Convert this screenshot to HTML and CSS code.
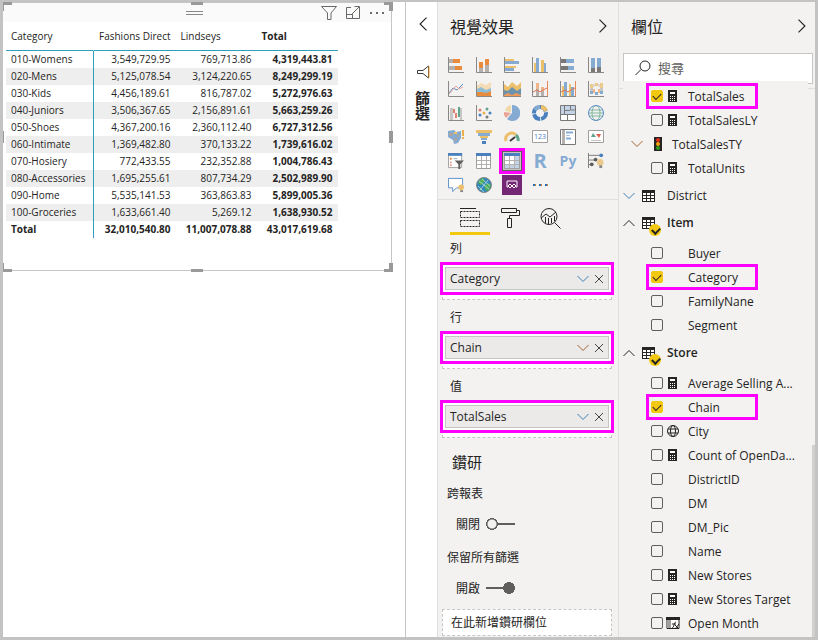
FILE: index.html
```
<!DOCTYPE html>
<html lang="zh-Hant">
<head>
    <meta charset="UTF-8">
    <meta name="viewport" content="width=device-width, initial-scale=1.0">
    <title>視覺效果</title>
    <link rel="stylesheet" href="styles.css">
</head>
<body>
    <!-- Shared icons -->
    <svg class="sprite" aria-hidden="true">
        <symbol id="down" viewBox="0 0 12 12"><path d="M.5 3l5.500 5.500L11.500 3" fill="none" stroke="currentColor"/></symbol>
        <symbol id="up" viewBox="0 0 12 12"><path d="M.5 9L6 3.500 11.500 9" fill="none" stroke="currentColor"/></symbol>
        <symbol id="right" viewBox="0 0 12 12"><path d="M3 .5L8.500 6 3 11.500" fill="none" stroke="currentColor"/></symbol>
        <symbol id="left" viewBox="0 0 12 12"><path d="M9 .5L3.500 6 9 11.500" fill="none" stroke="currentColor"/></symbol>
        <symbol id="close" viewBox="0 0 12 12"><path d="M2 2l8 8M10 2l-8 8" fill="none" stroke="currentColor"/></symbol>
        <symbol id="calc" viewBox="0 0 14 14"><rect x="2" y="1" width="9" height="12" fill="#252423"/><path d="M4 3h5v2H4z" fill="#fff"/><path d="M4 7.500h5M4 9.500h5M4 11.500h5" stroke="#fff" stroke-dasharray="1 1"/></symbol>
        <symbol id="globe" viewBox="0 0 14 14"><g fill="none" stroke="#252423"><circle cx="7" cy="7" r="5.500"/><ellipse cx="7" cy="7" rx="2.500" ry="5.500"/><path d="M2 5h10M2 9h10"/></g></symbol>
        <symbol id="table" viewBox="0 0 14 14"><rect x=".5" y="1.500" width="12" height="11" fill="#fff" stroke="#252423"/><path d="M0 1h13v3H0z" fill="#252423"/><path d="M4.500 4v8M8.500 4v8M1 6.500h12M1 9.500h12" stroke="#252423"/></symbol>
    </svg>

    <div class="app">
        <main class="canvas">
            <section class="visual">
                <div class="visual-header">
                    <svg class="grip" viewBox="0 0 17 6"><path d="M0 1.500h17M0 4.500h17" stroke="#8a8886"/></svg>
                    <div class="visual-actions">
                        <button aria-label="篩選"><svg width="16" height="16" viewBox="0 0 16 16"><path d="M.5 1.500h15l-5.500 6.500v6.500H6.500V8z" fill="none" stroke="#6b6966"/></svg></button>
                        <button aria-label="焦點模式"><svg width="16" height="16" viewBox="0 0 16 16"><path d="M6 2.500H1.500v11h13V6M1.500 9.500h6v4M7 9l7-7M9.500 1.500h5V6" fill="none" stroke="#6b6966"/></svg></button>
                        <button aria-label="更多選項"><svg width="16" height="16" viewBox="0 0 16 16"><path d="M1 7h2v2H1zM7 7h2v2H7zM13 7h2v2h-2z" fill="#6b6966"/></svg></button>
                    </div>
                </div>
                <table class="matrix">
                    <thead>
                        <tr><th>Category</th><th>Fashions Direct</th><th>Lindseys</th><th class="total">Total</th></tr>
                    </thead>
                    <tbody>
                        <tr><th>010-Womens</th><td>3,549,729.95</td><td>769,713.86</td><td class="total">4,319,443.81</td></tr>
                        <tr><th>020-Mens</th><td>5,125,078.54</td><td>3,124,220.65</td><td class="total">8,249,299.19</td></tr>
                        <tr><th>030-Kids</th><td>4,456,189.61</td><td>816,787.02</td><td class="total">5,272,976.63</td></tr>
                        <tr><th>040-Juniors</th><td>3,506,367.65</td><td>2,156,891.61</td><td class="total">5,663,259.26</td></tr>
                        <tr><th>050-Shoes</th><td>4,367,200.16</td><td>2,360,112.40</td><td class="total">6,727,312.56</td></tr>
                        <tr><th>060-Intimate</th><td>1,369,482.80</td><td>370,133.22</td><td class="total">1,739,616.02</td></tr>
                        <tr><th>070-Hosiery</th><td>772,433.55</td><td>232,352.88</td><td class="total">1,004,786.43</td></tr>
                        <tr><th>080-Accessories</th><td>1,695,255.61</td><td>807,734.29</td><td class="total">2,502,989.90</td></tr>
                        <tr><th>090-Home</th><td>5,535,141.53</td><td>363,863.83</td><td class="total">5,899,005.36</td></tr>
                        <tr><th>100-Groceries</th><td>1,633,661.40</td><td>5,269.12</td><td class="total">1,638,930.52</td></tr>
                    </tbody>
                    <tfoot>
                        <tr><th>Total</th><td>32,010,540.80</td><td>11,007,078.88</td><td>43,017,619.68</td></tr>
                    </tfoot>
                </table>
                <span class="handle nw"></span><span class="handle n"></span><span class="handle ne"></span>
                <span class="handle w"></span><span class="handle e"></span>
                <span class="handle sw"></span><span class="handle s"></span><span class="handle se"></span>
            </section>
        </main>

        <aside class="filters">
            <button aria-label="展開"><svg width="14" height="14"><use href="#left"/></svg></button>
            <svg class="funnel" width="14" height="14" viewBox="0 0 14 14"><path d="M12.500 1v12L7 8.500H1.500v-3H7z" fill="none" stroke="#3b3a39"/><path d="M13 1v12" stroke="#e8a33d"/></svg>
            <h2>篩選</h2>
        </aside>

        <aside class="visuals">
            <div class="pane-title">
                <h2>視覺效果</h2>
                <button aria-label="摺疊"><svg width="14" height="14"><use href="#right"/></svg></button>
            </div>

            <div class="gallery">
                <button aria-label="堆疊橫條圖"><svg viewBox="0 0 16 16"><path d="M1 2h4v4H1zM1 9h6v4H1z" fill="#b3b0ad"/><path d="M5 2h7v4H5zM7 9h7v4H7z" fill="#e88b3d"/><path d="M.5 0v15.500H16" class="axis"/></svg></button>
                <button aria-label="堆疊直條圖"><svg viewBox="0 0 16 16"><path d="M3 11h4v4H3zM9 8h4v7H9z" fill="#b3b0ad"/><path d="M3 5h4v6H3zM9 2h4v6H9z" fill="#e88b3d"/><path d="M.5 0v15.500H16" class="axis"/></svg></button>
                <button aria-label="群組橫條圖"><svg viewBox="0 0 16 16"><path d="M1 2h9v2H1zM1 9h11v2H1z" fill="#ecc06a"/><path d="M1 4h14v3H1zM1 11h9v3H1z" fill="#86abd3"/><path d="M.5 0v15.500H16" class="axis"/></svg></button>
                <button aria-label="群組直條圖"><svg viewBox="0 0 16 16"><path d="M2 6h2v9H2zM9 3h3v12H9z" fill="#ecc06a"/><path d="M4 1h3v14H4zM12 6h2v9h-2z" fill="#86abd3"/><path d="M.5 0v15.500H16" class="axis"/></svg></button>
                <button aria-label="百分比堆疊橫條圖"><svg viewBox="0 0 16 16"><path d="M1 2h5v4H1zM1 9h7v4H1z" fill="#7a7876"/><path d="M6 2h8v4H6zM8 9h6v4H8z" fill="#86abd3"/><path d="M.5 0v15.500H16" class="axis"/></svg></button>
                <button aria-label="百分比堆疊直條圖"><svg viewBox="0 0 16 16"><path d="M3 11h4v4H3zM9 10h4v5H9z" fill="#7a7876"/><path d="M3 1h4v10H3zM9 1h4v9H9z" fill="#86abd3"/><path d="M.5 0v15.500H16" class="axis"/></svg></button>

                <button aria-label="折線圖"><svg viewBox="0 0 16 16"><path d="M1 12l4-5 4 2 6-6" fill="none" stroke="#5a8fc7"/><path d="M1 13l7-8 3 3 4-2" fill="none" stroke="#e9a29a"/><path d="M.5 0v15.500H16" class="axis"/></svg></button>
                <button aria-label="區域圖"><svg viewBox="0 0 16 16"><path d="M1 5l4-3 5 2 5-3v14H1z" fill="#f3dcb5"/><path d="M1 8l4-2 5 3 5-2v8H1z" fill="#8fbdd3"/><path d="M1 11h5l4 1 5-2v5H1z" fill="#e88b3d"/><path d="M.5 0v15.500H16" class="axis"/></svg></button>
                <button aria-label="堆疊區域圖"><svg class="wide" viewBox="0 0 18 16"><path d="M1 3l4 3 4-5 5 4 4-4v14H1z" fill="#ecc06a"/><path d="M1 9l4 1 4-4 5 4 4-3v8H1z" fill="#6c93ae"/><path d="M1 14l4-2 4 2 4-2 5 2v1H1z" fill="#ef9a5b"/><path d="M.5 0v15.500H18" class="axis"/></svg></button>
                <button aria-label="折線與堆疊直條圖"><svg viewBox="0 0 16 16"><path d="M4 8h3v7H4zM9 10h3v5H9z" fill="#b3b0ad"/><path d="M4 2h3v6H4zM9 6h3v4H9z" fill="#f0b48a"/><path d="M1 11l4-2 3 2 3-2 4-2" fill="none" stroke="#e07050"/><path d="M15.500 0v15" stroke="#e88b5a"/><path d="M.5 0v15.500H16" class="axis"/></svg></button>
                <button aria-label="折線與群組直條圖"><svg viewBox="0 0 16 16"><path d="M2 5h2v10H2zM9 3h2v12H9z" fill="#ecc06a"/><path d="M4 1h3v14H4zM11 6h3v9h-3z" fill="#86abd3"/><path d="M1 11l4-2 3 2 3-2 4-2" fill="none" stroke="#e07050"/><path d="M15.500 0v15" stroke="#e88b5a"/><path d="M.5 0v15.500H16" class="axis"/></svg></button>
                <button aria-label="緞帶圖"><svg viewBox="0 0 16 16"><path d="M2 3h3v4H2zM7 2h3v3H7zM12 2h3v5h-3z" fill="#ecc98c"/><path d="M5 3h2v3H5zM10 3h2v3h-2z" fill="#ddd8d0"/><path d="M2 7h3v3H2zM12 7h3v3h-3z" fill="#c8c6c4"/><path d="M2 10h3v3H2zM7 11h3v3H7zM12 10h3v3h-3z" fill="#86abd3"/><path d="M5 8h2v4H5zM10 8h2v4h-2z" fill="#f0b48a"/><path d="M.5 0v15.500H16" class="axis"/></svg></button>

                <button aria-label="瀑布圖"><svg viewBox="0 0 16 16"><path d="M2 3h3v12H2zM12 3h2v12h-2z" fill="#c8c6c4"/><path d="M5 4h2v4H5zM7 8h2v5H7z" fill="#e0816f"/><path d="M10 2h2v10h-2z" fill="#5fa58b"/><path d="M.5 0v15.500H16" class="axis"/></svg></button>
                <button aria-label="散佈圖"><svg viewBox="0 0 16 16"><circle cx="4" cy="5" r="1.500" fill="#e0816f"/><circle cx="11" cy="4" r="1.500" fill="#5fa58b"/><circle cx="8" cy="8" r="1.500" fill="#ecb04a"/><g fill="#4a80be"><circle cx="4" cy="10" r="1.500"/><circle cx="14" cy="8" r="1.500"/></g><circle cx="11" cy="12" r="1.500" fill="#7a7876"/><path d="M.5 0v15.500H16" class="axis"/></svg></button>
                <button aria-label="圓形圖"><svg viewBox="0 0 16 16"><path d="M8 8V0a8 8 0 1 1-5 14z" fill="#86abd3"/><path d="M7 7V0a8 8 0 0 0-6 6z" fill="#f0d9a8"/><path d="M7 8L2 13a7 7 0 0 1-2-6z" fill="#eba598"/></svg></button>
                <button aria-label="環圈圖"><svg viewBox="0 0 16 16" fill="none" stroke-width="4"><circle cx="8" cy="8" r="6" stroke="#4a80be" stroke-dasharray="8 1"/><path d="M9 2a6 6 0 0 1 5 4" stroke="#ecc06a"/><path d="M3 5a6 6 0 0 1 5-3" stroke="#86abd3"/></svg></button>
                <button aria-label="樹狀圖"><svg viewBox="0 0 16 16"><path d="M.5.500h15v15H.5z" fill="#fff" stroke="#7a7876"/><path d="M1 1h3v9H1zM5 1h10v8H5z" fill="#c3d4e8"/><path d="M4.500 0v10M0 9.500h16M7.500 10v6M4 5.500h6M10.500 1v4h5" stroke="#7a7876" fill="none"/></svg></button>
                <button aria-label="地圖"><svg viewBox="0 0 16 16" fill="none"><path d="M1 5h14M0 8h16M1 11h14" stroke="#7fb59f"/><ellipse cx="8" cy="8" rx="4" ry="7.500" stroke="#7fb59f"/><circle cx="8" cy="8" r="7.500" stroke="#5a8fc7"/></svg></button>

                <button aria-label="區域分布圖"><svg viewBox="0 0 16 16"><path d="M0 2l6-1 2 2 5-1v7l-3 5-4 1-1-4-5-3z" fill="#86abd3"/><path d="M1 4h4v3H1zM6 9h3v3H6zM9 5h2v3H9z" fill="#a8a6a4"/><path d="M6 3h3v2H6z" fill="#ecc06a"/><path d="M14 1h2v6h-2zM14 8h2v2h-2z" fill="#ecb04a"/></svg></button>
                <button aria-label="漏斗圖"><svg viewBox="0 0 16 16"><path d="M0 1h16v3H0zM4 7h8v2H4z" fill="#ecc06a"/><path d="M2 4h12v3H2zM5 9h6v2H5z" fill="#86abd3"/><path d="M6 12h4v3H6z" fill="#4a80be"/></svg></button>
                <button aria-label="量測計"><svg viewBox="0 0 16 16" fill="none"><path d="M2 12a6 6 0 0 1 10-6" stroke="#ecc06a" stroke-width="3"/><path d="M12 6a6 6 0 0 1 2 6" stroke="#5fa58b" stroke-width="3"/><path d="M6 12l5-4" stroke="#3b3a39" stroke-width="2"/></svg></button>
                <button aria-label="卡片"><svg viewBox="0 0 16 16"><path d="M.5 1.500h15v12H.5z" fill="#fff" stroke="#a19f9d"/><text x="8" y="10" font-size="7" text-anchor="middle" fill="#4a80be">123</text></svg></button>
                <button aria-label="多列卡片"><svg viewBox="0 0 16 16"><path d="M.5.500h15v15H.5z" fill="#fff" stroke="#7a7876"/><path d="M2 1h3v14H2z" fill="#b3b0ad"/><path d="M6 3.500h7M6 9.500h5" stroke="#86abd3" stroke-width="2"/><path d="M6 6.500h4" stroke="#a9c4e2"/></svg></button>
                <button aria-label="KPI"><svg viewBox="0 0 16 16"><path d="M.5 1.500h15v12H.5z" fill="#fff" stroke="#a19f9d"/><path d="M3 8l2-4 3 4z" fill="#5fa58b"/><path d="M8 5h5l-2 4z" fill="#e0614b"/><path d="M3 11.500h10" stroke="#c8c6c4"/></svg></button>

                <button aria-label="交叉分析篩選器"><svg viewBox="0 0 17 17"><path d="M.5.500h14v15H.5z" fill="#fff" stroke="#a19f9d"/><path d="M0 0h15v3H0z" fill="#4a80be"/><path d="M2 5h2v2H2z" fill="#e88b3d"/><path d="M2 9h2v2H2zM2 12h2v2H2z" fill="#eba598"/><path d="M6 6h4" stroke="#86abd3"/><path d="M7 8h10l-4 4v5h-2v-5z" fill="#605e5c"/></svg></button>
                <button aria-label="資料表"><svg viewBox="0 0 16 16"><path d="M.5.500h14v15H.5z" fill="#fff" stroke="#a19f9d"/><path d="M0 0h15v3H0z" fill="#4a80be"/><path d="M5.500 3v12M10.500 3v12M1 7.500h13M1 11.500h13" stroke="#b3b0ad"/></svg></button>
                <button class="selected" aria-label="矩陣"><svg viewBox="0 0 16 16"><path d="M.5.500h15v15H.5z" fill="#c3d4e8" stroke="#a19f9d"/><path d="M0 0h16v3H0z" fill="#4a80be"/><path d="M1 3h9v8H1z" fill="#fff"/><path d="M5.500 3v12M10.500 3v12M1 7.500h14M1 11.500h14" stroke="#b3b0ad"/></svg></button>
                <button class="script">R</button>
                <button class="script py">Py</button>
                <button aria-label="關鍵影響因素"><svg viewBox="0 0 17 17"><path d="M.5 0v16M1 2.500h14M1 7.500h6M1 12.500h4" stroke="#7a7876"/><circle cx="14" cy="2.500" r="2" fill="#4a80be"/><circle cx="8" cy="7" r="2" fill="#605e5c"/><circle cx="4" cy="12" r="2" fill="#605e5c"/><circle cx="13" cy="10" r="3.500" fill="#ecc98c"/><path d="M12 13h3v3h-3z" fill="#8a8886"/></svg></button>

                <button aria-label="問與答"><svg viewBox="0 0 17 17"><path d="M.5 1.500h15v10H9l-4 4v-4H.5z" fill="#fff" stroke="#5a8fc7"/><circle cx="14" cy="11" r="3" fill="#ecc06a"/><path d="M13 14h3v2h-3z" fill="#8a8886"/></svg></button>
                <button aria-label="ArcGIS 地圖"><svg viewBox="0 0 16 16"><circle cx="8" cy="8" r="7.500" fill="#2f86bd" stroke="#8a8886"/><path d="M2 5l4-4 3 2-2 4-3 1zM8 9l4-3 3 2-2 5-3 1zM3 10l3 2-1 2z" fill="#4fae58"/><path d="M3 4l10 8M6 2l8 7M2 9l6 6M12 3L4 13" stroke="#cfe6ee" stroke-width=".7"/></svg></button>
                <button aria-label="Power Apps"><svg class="apps" viewBox="0 0 20 20"><path d="M0 0h20v20H0z" fill="#742774"/><path d="M6 12H5V6h10v6h-1" fill="none" stroke="#fff"/><path d="M8 9l2 2-2 2-2-2zM12 9l2 2-2 2-2-2z" fill="none" stroke="#fff"/></svg></button>
                <button aria-label="更多視覺效果"><svg viewBox="0 0 16 16"><path d="M1 7h2v2H1zM7 7h2v2H7zM13 7h2v2h-2z" fill="#2b6cb0"/><path d="M3 7h1v2H3zM9 7h1v2H9zM15 7h1v2h-1z" fill="#c88a4a"/></svg></button>
            </div>

            <div class="tabs">
                <button class="active" aria-label="欄位"><svg viewBox="0 0 22 22"><path d="M1 1.500h16" stroke="#252423"/><path d="M1.500 4.500h19v6h-19zM1.500 13.500h19v6h-19z" fill="none" stroke="#252423" stroke-dasharray="2 1"/></svg></button>
                <button aria-label="格式"><svg viewBox="0 0 22 22"><path d="M2.500 1.500h15v4h-15zM17.500 3.500h3v5h-10v3M8.500 11.500h4v9h-4z" fill="none" stroke="#252423"/></svg></button>
                <button aria-label="分析"><svg viewBox="0 0 22 22"><g fill="none" stroke="#252423"><circle cx="10" cy="9.500" r="8"/><path d="M2 11l5-4 4 3 6-5M6.500 10v6M9.500 11v6M12.500 11v5M15.500 9v5M15.500 15.500l6 6"/></g></svg></button>
            </div>

            <div class="wells">
                <h3>列</h3>
                <div class="well"><div class="chip"><span>Category</span><button aria-label="選項"><svg width="12" height="12"><use href="#down"/></svg></button><button aria-label="移除"><svg width="12" height="12"><use href="#close"/></svg></button></div></div>
                <h3>行</h3>
                <div class="well"><div class="chip"><span>Chain</span><button class="warm" aria-label="選項"><svg width="12" height="12"><use href="#down"/></svg></button><button aria-label="移除"><svg width="12" height="12"><use href="#close"/></svg></button></div></div>
                <h3>值</h3>
                <div class="well"><div class="chip"><span>TotalSales</span><button aria-label="選項"><svg width="12" height="12"><use href="#down"/></svg></button><button aria-label="移除"><svg width="12" height="12"><use href="#close"/></svg></button></div></div>
            </div>

            <div class="drill">
                <h2>鑽研</h2>
                <h3>跨報表</h3>
                <label class="switch">關閉<input type="checkbox"></label>
                <h3>保留所有篩選</h3>
                <label class="switch">開啟<input type="checkbox" checked></label>
                <div class="drop">在此新增鑽研欄位</div>
            </div>
        </aside>

        <aside class="fields">
            <div class="fields-head">
                <div class="pane-title">
                    <h2>欄位</h2>
                    <button aria-label="摺疊"><svg width="14" height="14"><use href="#right"/></svg></button>
                </div>
                <label class="search">
                    <svg width="16" height="16" viewBox="0 0 16 16"><circle cx="10" cy="6" r="5" fill="none" stroke="#252423"/><path d="M6 9.500L.5 15" stroke="#252423"/></svg>
                    <input type="text" placeholder="搜尋" aria-label="搜尋">
                </label>
            </div>
            <div class="field-list">
                <ul>
                    <li><label class="marked"><input type="checkbox" checked><svg><use href="#calc"/></svg><span>TotalSales</span></label></li>
                    <li><label><input type="checkbox"><svg><use href="#calc"/></svg><span>TotalSalesLY</span></label></li>
                    <li><button class="kpi"><svg class="warm" width="12" height="12"><use href="#down"/></svg><svg width="8" height="14" viewBox="0 0 8 14"><path d="M0 0h8v14H0z" fill="#252423"/><circle cx="4" cy="3" r="2" fill="#e0301e"/><circle cx="4" cy="7" r="2" fill="#f2a50c"/><circle cx="4" cy="11" r="2" fill="#2f9e1f"/></svg><span>TotalSalesTY</span></button></li>
                    <li><label><input type="checkbox"><svg><use href="#calc"/></svg><span>TotalUnits</span></label></li>
                </ul>
                <button class="group"><svg class="cool" width="12" height="12"><use href="#down"/></svg><svg width="14" height="14"><use href="#table"/></svg><span>District</span></button>
                <button class="group open"><svg width="12" height="12"><use href="#up"/></svg><span class="used"><svg width="14" height="14"><use href="#table"/></svg></span><span>Item</span></button>
                <ul>
                    <li><label><input type="checkbox"><svg></svg><span>Buyer</span></label></li>
                    <li><label class="marked"><input type="checkbox" checked><svg></svg><span>Category</span></label></li>
                    <li><label><input type="checkbox"><svg></svg><span>FamilyNane</span></label></li>
                    <li><label><input type="checkbox"><svg></svg><span>Segment</span></label></li>
                </ul>
                <button class="group open"><svg width="12" height="12"><use href="#up"/></svg><span class="used"><svg width="14" height="14"><use href="#table"/></svg></span><span>Store</span></button>
                <ul>
                    <li><label><input type="checkbox"><svg><use href="#calc"/></svg><span>Average Selling A...</span></label></li>
                    <li><label class="marked"><input type="checkbox" checked><svg></svg><span>Chain</span></label></li>
                    <li><label><input type="checkbox"><svg><use href="#globe"/></svg><span>City</span></label></li>
                    <li><label><input type="checkbox"><svg><use href="#calc"/></svg><span>Count of OpenDa...</span></label></li>
                    <li><label><input type="checkbox"><svg></svg><span>DistrictID</span></label></li>
                    <li><label><input type="checkbox"><svg></svg><span>DM</span></label></li>
                    <li><label><input type="checkbox"><svg></svg><span>DM_Pic</span></label></li>
                    <li><label><input type="checkbox"><svg></svg><span>Name</span></label></li>
                    <li><label><input type="checkbox"><svg><use href="#calc"/></svg><span>New Stores</span></label></li>
                    <li><label><input type="checkbox"><svg><use href="#calc"/></svg><span>New Stores Target</span></label></li>
                    <li><label><input type="checkbox"><svg viewBox="0 0 14 14"><path d="M1 1.500h12v11H1z" fill="#fff" stroke="#252423"/><path d="M0 1h14v3H0z" fill="#252423"/><path d="M1 4h4v8H1z" fill="#a19f9d"/><path d="M6 12c2 0 2-6 4-6M6 8h4M9 9l4 4M13 8l-4 5" fill="none" stroke="#252423"/></svg><span>Open Month</span></label></li>
                </ul>
            </div>
            <div class="scroll-thumb"></div>
        </aside>
    </div>
</body>
</html>
```

FILE: styles.css
```
* {
    box-sizing: border-box;
}
body {
    margin: 0;
    font-family: "Open Sans", "Noto Sans CJK TC", sans-serif;
    font-size: 12px;
    color: #252423;
}
h2, h3, ul {
    margin: 0;
    padding: 0;
    font-weight: normal;
}
ul {
    list-style: none;
}
button {
    padding: 0;
    border: none;
    background: none;
    font: inherit;
    color: inherit;
    cursor: pointer;
}
svg {
    display: block;
    flex: none;
}
.sprite {
    position: absolute;
    width: 0;
    height: 0;
}
.app {
    display: flex;
    height: 100vh;
    border: 3px solid #c3c3c3;
    border-top-width: 2px;
    overflow: hidden;
}

/* Report canvas */
.canvas {
    flex: 1;
    min-width: 0;
    padding-right: 13px;
    background: #fff;
    border-right: 1px solid #c8c6c4;
}
.visual {
    position: relative;
    padding-bottom: 32px;
    border: solid #c8c6c4;
    border-width: 1px 1px 1px 0;
}
.visual-header {
    display: grid;
    grid-template-columns: 1fr auto 1fr;
    align-items: center;
    height: 19px;
    padding-right: 6px;
    background: #fafafa;
}
.grip {
    grid-column: 2;
    width: 17px;
    height: 6px;
}
.visual-actions {
    display: flex;
    justify-content: flex-end;
    gap: 8px;
}
.handle {
    position: absolute;
    width: 7px;
    height: 3px;
    background: #999;
}
.n, .s {
    left: 50%;
    width: 12px;
    margin-left: -6px;
}
.n, .nw, .ne { top: -1px; }
.s, .sw, .se { bottom: -2px; }
.nw, .sw, .w { left: 0; }
.ne, .se, .e { right: -2px; }
.w, .e {
    top: 50%;
    width: 4px;
    height: 12px;
    margin-top: -6px;
}
.w { width: 1px; }
.ne, .se, .nw, .sw {
    width: 9px;
    height: 9px;
    background: none;
    border: 0 solid #999;
}
.ne { border-width: 3px 4px 0 0; }
.se { border-width: 0 4px 3px 0; }
.nw { border-width: 3px 0 0 1px; }
.sw { border-width: 0 0 3px 1px; }

.matrix {
    margin-left: 3px;
    border-collapse: separate;
    border-spacing: 0;
    font-size: 10px;
    white-space: nowrap;
}
.matrix th, .matrix td {
    width: 81px;
    height: 17px;
    padding: 0 5px;
    line-height: 17px;
    text-align: right;
    font-weight: normal;
}
.matrix th:first-child {
    width: 88px;
    border-right: 1px solid #2b9fbc;
    text-align: left;
}
.matrix thead th {
    height: 29px;
    border-bottom: 1px solid #2b9fbc;
    text-align: left;
}
.matrix thead th:first-child {
    border-right-color: transparent;
}
.matrix tbody tr:nth-child(even) {
    background: #eee;
}
.matrix .total, .matrix tfoot th, .matrix tfoot td {
    font-weight: 700;
}

/* Collapsed filter pane */
.filters {
    display: flex;
    flex-direction: column;
    align-items: center;
    width: 32px;
    padding: 15px 0 0 2px;
    background: #fff;
    border-right: 1px solid #e1dfdd;
}
.filters .funnel {
    margin: 34px 0 12px;
}
.filters h2 {
    writing-mode: vertical-rl;
    font-size: 15px;
    font-weight: 700;
}

/* Visualizations pane */
.visuals, .fields {
    display: flex;
    flex-direction: column;
    background: #f3f2f1;
}
.visuals {
    width: 181px;
    border-right: 1px solid #e1dfdd;
}
.pane-title {
    display: flex;
    align-items: center;
    justify-content: space-between;
    height: 51px;
    padding: 0 8px 4px 12px;
}
.pane-title h2 {
    font-size: 16px;
}
.gallery {
    display: grid;
    grid-template-columns: repeat(6, 28px);
    grid-auto-rows: 24px;
    padding: 0 4px 2px;
    border-bottom: 1px solid #e1dfdd;
}
.gallery button {
    display: grid;
    place-items: center;
}
.gallery svg {
    width: 16px;
    height: 16px;
}
.gallery .wide {
    width: 18px;
}
.gallery .apps {
    width: 20px;
    height: 20px;
}
.axis {
    fill: none;
    stroke: #8a8886;
}
.gallery .selected {
    place-self: center;
    width: 20px;
    height: 20px;
    background: #c8c6c4;
    border: 1px solid #605e5c;
    outline: 3px solid #f0f;
}
.gallery .script {
    font-size: 20px;
    font-weight: 700;
    line-height: 20px;
    color: #86abd3;
}
.gallery .py {
    font-size: 14px;
}
.tabs {
    display: flex;
    padding-left: 12px;
}
.tabs button {
    display: grid;
    justify-content: center;
    width: 40px;
    height: 35px;
    padding-top: 7px;
    border-bottom: 3px solid transparent;
}
.tabs .active {
    border-color: #f2c811;
}
.tabs svg {
    width: 22px;
    height: 22px;
}
.wells {
    padding: 4px 6px 0 4px;
}
.wells h3 {
    padding-left: 8px;
    font-size: 12px;
    line-height: 20px;
}
.well {
    height: 37px;
    margin: 4px 0 8px;
    padding: 3px 2px;
    background: #fff;
    border: 1px dashed #c8c6c4;
}
.chip {
    display: flex;
    align-items: center;
    gap: 4px;
    height: 23px;
    padding: 0 3px 0 4px;
    background: #ebeae9;
    border: 1px solid #c8c6c4;
    outline: 3px solid #f0f;
    outline-offset: 2px;
}
.chip span {
    flex: 1;
}
.chip button {
    color: #484644;
}
.chip button:nth-child(2), .cool {
    color: #3d7fb5;
}
.chip .warm.warm, .warm {
    color: #a8622c;
}
.drill {
    padding: 4px 6px 0 4px;
}
.drill h2 {
    padding-left: 10px;
    font-size: 15px;
    line-height: 24px;
}
.drill h3 {
    margin-top: 10px;
    padding-left: 5px;
    font-size: 12px;
    line-height: 20px;
}
.switch {
    display: flex;
    align-items: center;
    gap: 6px;
    height: 20px;
    margin: 10px 0 14px 14px;
}
.switch input {
    appearance: none;
    width: 29px;
    height: 12px;
    margin: 0;
    background: radial-gradient(circle at 6px 6px, #f3f2f1 4px, #605e5c 5px, #605e5c 6px, transparent 6px),
        linear-gradient(#605e5c, #605e5c) 0 5px / 100% 2px no-repeat;
}
.switch input:checked {
    background: radial-gradient(circle at 23px 6px, #605e5c 6px, transparent 6px),
        linear-gradient(#605e5c, #605e5c) 0 5px / 100% 2px no-repeat;
}
.drop {
    height: 27px;
    margin-top: 11px;
    padding-left: 8px;
    line-height: 25px;
    background: #fff;
    border: 1px dashed #c8c6c4;
}
.switch + .drop {
    margin-top: -3px;
}

/* Fields pane */
.fields {
    position: relative;
    width: 196px;
    overflow: hidden;
}
.fields-head {
    height: 87px;
    flex: none;
    border-bottom: 1px solid #e1dfdd;
}
.fields-head .pane-title {
    padding-right: 6px;
}
.search {
    display: flex;
    align-items: center;
    gap: 7px;
    height: 31px;
    margin: 0 2px 0 4px;
    padding: 0 0 2px 11px;
    background: #fff;
    border: 1px solid #c8c6c4;
}
.search input {
    flex: 1;
    min-width: 0;
    padding: 0;
    border: none;
    outline: none;
    background: none;
    font: inherit;
    font-size: 13px;
}
.search input::placeholder {
    color: #605e5c;
}
.field-list {
    position: relative;
    flex: 1;
    min-height: 0;
    margin: -8px 7px 0 4px;
    padding-top: 3px;
    background: #f3f2f1;
    overflow: hidden;
}
.field-list ul {
    margin: 5px 0 2px;
}
.field-list ul:first-child {
    margin-top: 0;
}
.field-list li {
    height: 24px;
    padding: 2px 0 2px 26px;
}
.field-list label {
    display: flex;
    align-items: center;
    height: 20px;
    padding-left: 2px;
    white-space: nowrap;
}
.field-list label svg {
    width: 14px;
    height: 14px;
    margin: 0 8px 0 3px;
}
.field-list .marked {
    width: 106px;
    outline: 3px solid #f0f;
}
.field-list input {
    appearance: none;
    flex: none;
    width: 12px;
    height: 12px;
    margin: 0;
    border: 1px solid #605e5c;
    border-radius: 2px;
}
.field-list input:checked {
    border-color: #f2c811;
    background: #f2c811;
}
/* Tick inside a checked box */
.field-list input:checked::after {
    content: "";
    display: block;
    width: 7px;
    height: 4px;
    margin: 2px 1px;
    border: solid #252423;
    border-width: 0 0 1px 1px;
    transform: rotate(-45deg);
}
.kpi, .group {
    display: flex;
    align-items: center;
    text-align: left;
}
.kpi {
    gap: 11px;
    height: 20px;
    margin-left: -18px;
}
.kpi svg + svg {
    margin-right: -1px;
}
.group {
    width: 100%;
    height: 27px;
}
.group span:last-child {
    margin-left: 11px;
}
.group > svg:first-child {
    margin-right: 7px;
}
.open {
    font-weight: 600;
}
.used {
    position: relative;
}
/* Yellow badge on tables that have fields in use */
.used::before {
    content: "";
    position: absolute;
    left: 7px;
    top: 8px;
    width: 12px;
    height: 12px;
    border-radius: 50%;
    background: #f2c811;
}
.used::after {
    content: "";
    position: absolute;
    left: 10px;
    top: 11px;
    width: 6px;
    height: 4px;
    border: solid #252423;
    border-width: 0 0 2px 2px;
    transform: rotate(-45deg);
}
.scroll-thumb {
    position: absolute;
    right: 0;
    top: 443px;
    bottom: 0;
    width: 3px;
    background: #d2d0ce;
}
```
